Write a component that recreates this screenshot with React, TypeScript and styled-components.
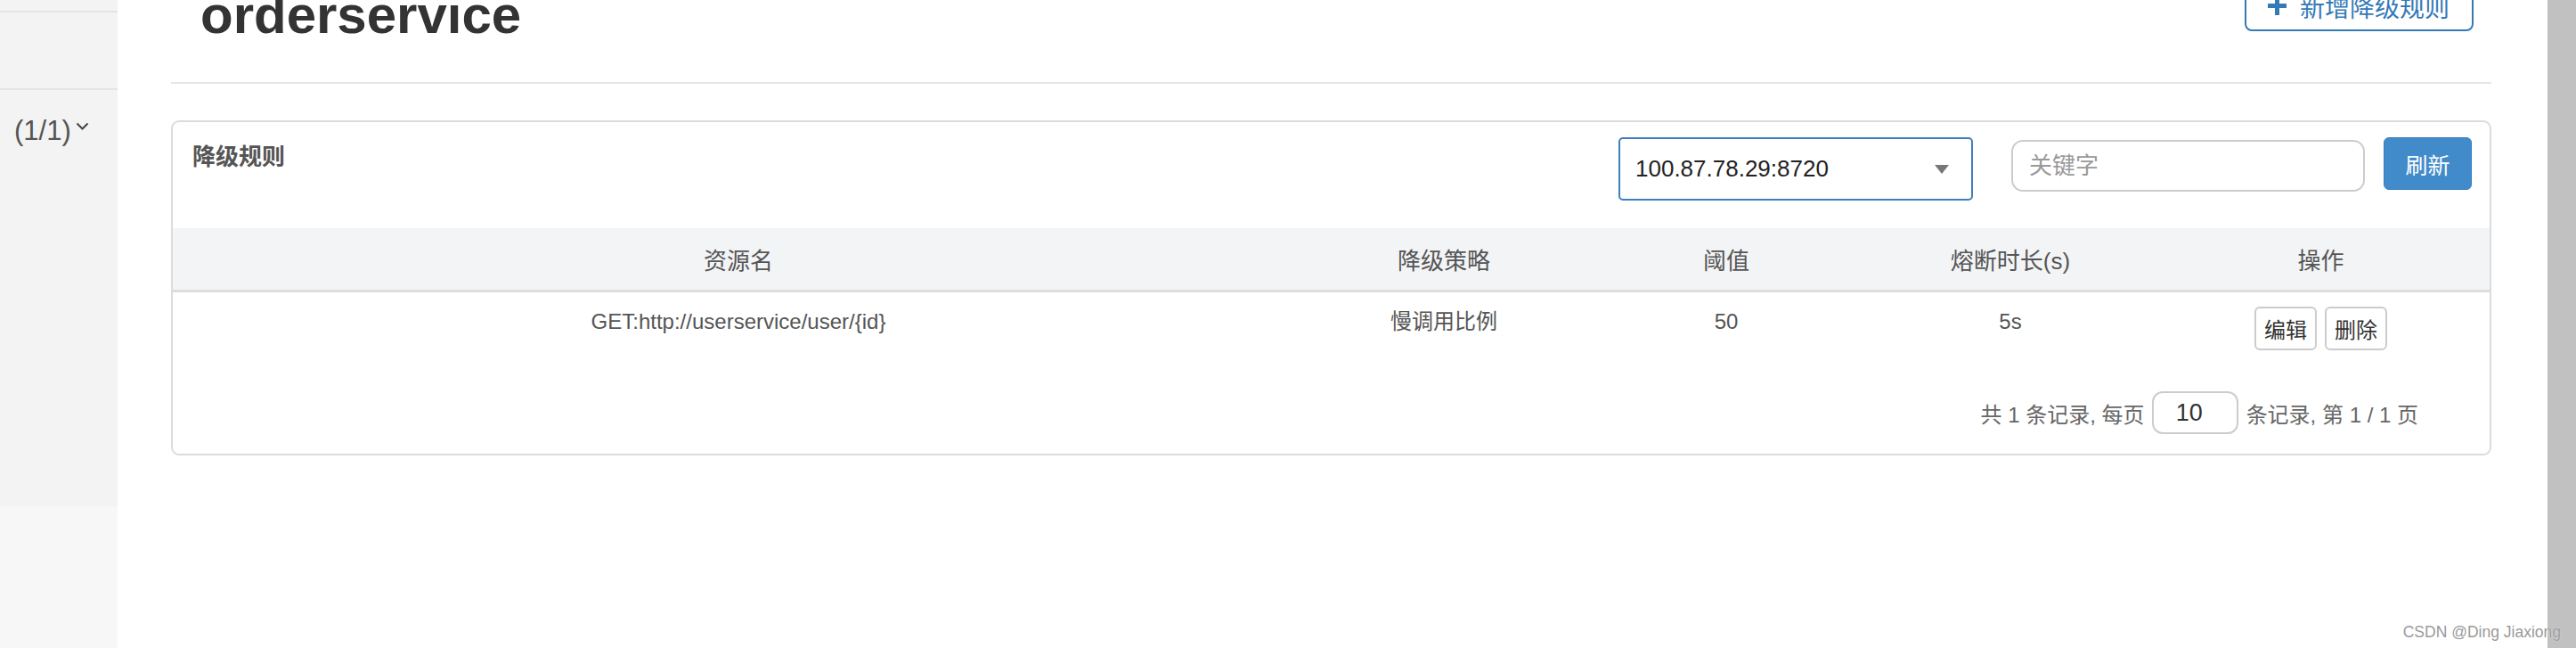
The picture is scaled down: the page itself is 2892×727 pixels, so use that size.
import React from 'react';
import styled, { createGlobalStyle } from 'styled-components';

const GlobalStyle = createGlobalStyle`
    html, body {
        margin: 0;
        padding: 0;
        width: 2892px;
        height: 727px;
        overflow: hidden;
        background: #fff;
        font-family: "Liberation Sans", "Noto Sans CJK SC", sans-serif;
    }
    * {
        box-sizing: border-box;
    }
`

const Page = styled.div`
    position: relative;
    display: flex;
    height: 727px;
`

const Sidebar = styled.div`
    width: 132px;
    display: flex;
    flex-direction: column;
`

const SideNav = styled.div`
    height: 568px;
    background: #f3f3f3;
`

const SideRow = styled.div<{ $h: number }>`
    height: ${p => p.$h + 2}px;
    border-bottom: 2px solid #e4e4e4;
`

const Pager = styled.div`
    display: flex;
    align-items: flex-start;
    margin-top: 28px;
    padding-left: 16px;
    font-size: 31px;
    line-height: 36px;
    color: #555;
`

const Chevron = styled.svg`
    margin: 8px 0 0 5px;
`

const SideFill = styled.div`
    flex: 1;
    background: #f7f7f7;
`

const Main = styled.div`
    flex: 1;
    min-width: 0;
    padding: 0 63px 0 60px;
`

const Header = styled.div`
    display: flex;
    justify-content: space-between;
    align-items: flex-start;
    margin-top: -22px;
    padding: 0 20px 0 33px;
`

const Title = styled.h1`
    margin: 0;
    padding-top: 5px;
    font-size: 60px;
    line-height: 67px;
    font-weight: bold;
    color: #333;
`

const AddButton = styled.button`
    display: flex;
    align-items: center;
    gap: 15px;
    height: 57px;
    padding: 0 25px 0 24px;
    border: 2px solid #337ab7;
    border-radius: 8px;
    background: #fff;
    color: #337ab7;
    font-family: inherit;
    font-size: 28px;
`

const Rule = styled.div`
    margin-top: 42px;
    height: 2px;
    background: #e6e6e6;
`

const Panel = styled.div`
    margin-top: 41px;
    border: 2px solid #dcdcdc;
    border-radius: 9px;
    overflow: hidden;
`

const Toolbar = styled.div`
    display: flex;
    align-items: flex-start;
    height: 119px;
    padding: 17px 20px 0 22px;
`

const PanelTitle = styled.div`
    flex: 1;
    margin-top: 7px;
    font-size: 26px;
    line-height: 30px;
    font-weight: bold;
    color: #555;
`

const SelectBox = styled.div`
    display: flex;
    align-items: center;
    width: 398px;
    height: 71px;
    padding: 0 25px 0 17px;
    border: 2px solid #3d7ebf;
    border-radius: 5px;
    font-size: 26px;
    color: #222;
`

const SelectValue = styled.span`
    flex: 1;
`

const Caret = styled.span`
    width: 0;
    height: 0;
    border-left: 8px solid transparent;
    border-right: 8px solid transparent;
    border-top: 10px solid #777;
`

const KeywordInput = styled.input`
    width: 397px;
    height: 58px;
    margin: 3px 0 0 43px;
    padding: 0 18px;
    border: 2px solid #ccc;
    border-radius: 13px;
    font-family: inherit;
    font-size: 26px;
    color: #333;
    outline: none;
    &::placeholder {
        color: #999;
    }
`

const RefreshButton = styled.button`
    width: 99px;
    height: 59px;
    margin-left: 21px;
    border: 1px solid #357ebd;
    border-radius: 6px;
    background: #428bca;
    color: #fff;
    font-family: inherit;
    font-size: 25px;
`

const columns = '1270px 314px 320px 318px 1fr';

const HeadRow = styled.div`
    display: grid;
    grid-template-columns: ${columns};
    align-items: center;
    height: 72px;
    background: #f3f4f6;
    border-bottom: 3px solid #dddddd;
    font-size: 26px;
    color: #555;
    text-align: center;
`

const BodyRow = styled.div`
    display: grid;
    grid-template-columns: ${columns};
    align-items: start;
    padding-top: 16px;
    font-size: 24px;
    line-height: 34px;
    color: #555;
    text-align: center;
`

const Actions = styled.div`
    display: flex;
    justify-content: center;
    gap: 9px;
`

const SmallButton = styled.button`
    width: 70px;
    height: 49px;
    padding: 0;
    border: 2px solid #ccc;
    border-radius: 6px;
    background: #fff;
    color: #333;
    font-family: inherit;
    font-size: 24px;
`

const Pagination = styled.div`
    display: flex;
    justify-content: flex-end;
    align-items: center;
    margin-top: 46px;
    padding: 0 80px 22px 0;
    font-size: 24px;
    color: #666;
`

const PageSize = styled.div`
    width: 97px;
    height: 48px;
    margin: 0 9px 0 8px;
    padding-left: 25px;
    border: 2px solid #ccc;
    border-radius: 12px;
    font-size: 27px;
    line-height: 44px;
    color: #333;
`

const Scrollbar = styled.div`
    width: 32px;
    background: #c1c1c1;
`

const Watermark = styled.div`
    position: absolute;
    right: 17px;
    bottom: 7px;
    font-size: 17.5px;
    color: #9a9a9a;
    text-shadow: 0 0 1px #fff;
`

interface Rule {
    resource: string,
    strategy: string,
    threshold: string,
    duration: string
}

const rules: Rule[] = [
    { resource: 'GET:http://userservice/user/{id}', strategy: '慢调用比例', threshold: '50', duration: '5s' }
];

const App: React.FC = () => {
    return (
        <Page>
            <GlobalStyle />
            <Sidebar>
                <SideNav>
                    <SideRow $h={12} />
                    <SideRow $h={85} />
                    <Pager>
                        (1/1)
                        <Chevron width="15" height="10" viewBox="0 0 15 10">
                            <polyline points="1.5,1.5 7.5,7.5 13.5,1.5" fill="none" stroke="#444" strokeWidth="2" />
                        </Chevron>
                    </Pager>
                </SideNav>
                <SideFill />
            </Sidebar>
            <Main>
                <Header>
                    <Title>orderservice</Title>
                    <AddButton>
                        <svg width="21" height="21" viewBox="0 0 21 21">
                            <path d="M8 0h5v8h8v5h-8v8H8v-8H0V8h8z" fill="#337ab7" />
                        </svg>
                        新增降级规则
                    </AddButton>
                </Header>
                <Rule />
                <Panel>
                    <Toolbar>
                        <PanelTitle>降级规则</PanelTitle>
                        <SelectBox>
                            <SelectValue>100.87.78.29:8720</SelectValue>
                            <Caret />
                        </SelectBox>
                        <KeywordInput placeholder="关键字" />
                        <RefreshButton>刷新</RefreshButton>
                    </Toolbar>
                    <HeadRow>
                        <div>资源名</div>
                        <div>降级策略</div>
                        <div>阈值</div>
                        <div>熔断时长(s)</div>
                        <div>操作</div>
                    </HeadRow>
                    {rules.map(rule => (
                        <BodyRow key={rule.resource}>
                            <div>{rule.resource}</div>
                            <div>{rule.strategy}</div>
                            <div>{rule.threshold}</div>
                            <div>{rule.duration}</div>
                            <Actions>
                                <SmallButton>编辑</SmallButton>
                                <SmallButton>删除</SmallButton>
                            </Actions>
                        </BodyRow>
                    ))}
                    <Pagination>
                        共 1 条记录, 每页
                        <PageSize>10</PageSize>
                        条记录, 第 1 / 1 页
                    </Pagination>
                </Panel>
            </Main>
            <Scrollbar />
            <Watermark>CSDN @Ding Jiaxiong</Watermark>
        </Page>
    )
}

export default App;
